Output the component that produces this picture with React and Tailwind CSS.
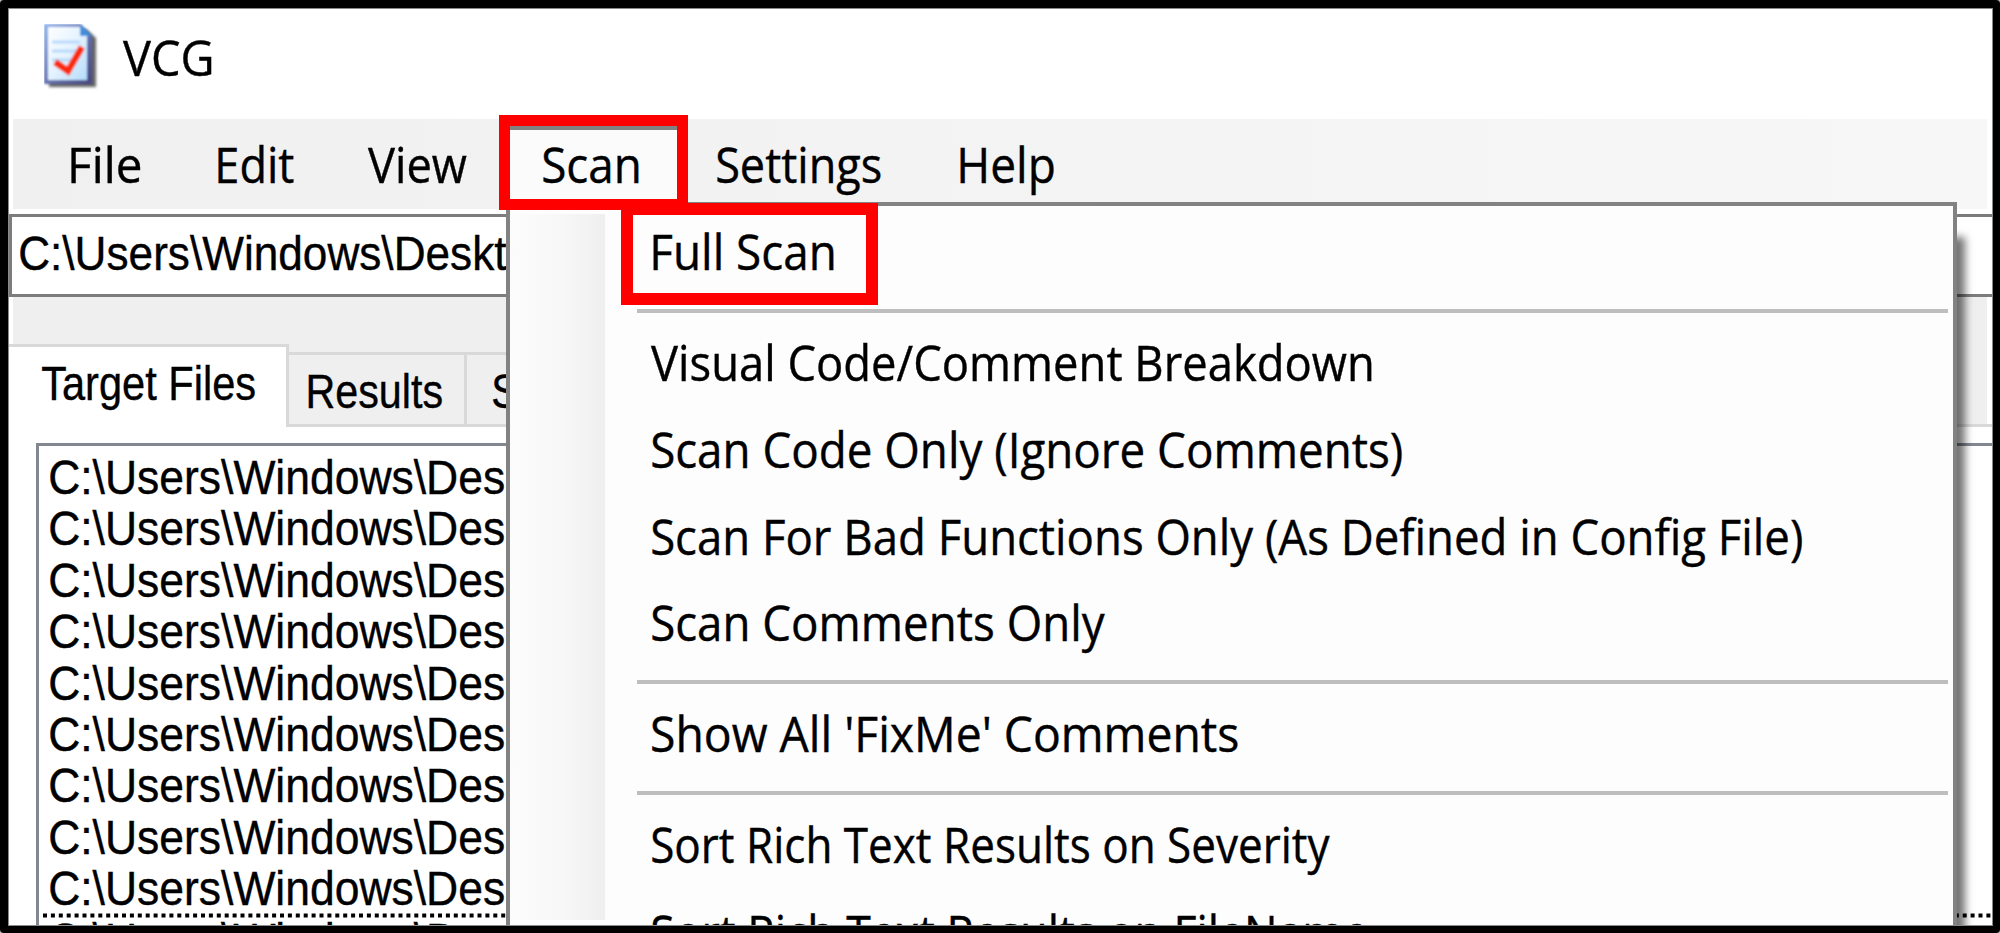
import React, { useLayoutEffect, useState } from "react";

const UI = '"Open Sans", "Noto Sans", sans-serif';
const GDI = '"Liberation Sans", Arial, sans-serif';

// A single line of text whose drawn glyphs span exactly `width` pixels.
function Label({ children, width, size = 49, font = UI, measure }) {
  const [transform, setTransform] = useState("none");
  useLayoutEffect(() => {
    const ctx = document.createElement("canvas").getContext("2d");
    ctx.font = `${size}px ${font}`;
    const m = ctx.measureText(measure || children);
    const ink = m.actualBoundingBoxRight + m.actualBoundingBoxLeft;
    const k = width / ink;
    setTransform(`translateX(${m.actualBoundingBoxLeft * k}px) scaleX(${k})`);
  }, [children, width, size, font, measure]);
  return (
    <span
      className="block w-0 origin-left whitespace-pre [-webkit-text-stroke:0.4px_#000]"
      style={{ fontFamily: font, fontSize: size, transform }}
    >
      {children}
    </span>
  );
}

function AppIcon() {
  return (
    <svg width="60" height="68" viewBox="0 0 60 68" className="block">
      <defs>
        <linearGradient id="page" x1="0" y1="0" x2="1" y2="1">
          <stop offset="0" stopColor="#ffffff" />
          <stop offset="0.5" stopColor="#e4f3ff" />
          <stop offset="1" stopColor="#b5dcfb" />
        </linearGradient>
        <linearGradient id="edge" x1="0" y1="0" x2="1" y2="1">
          <stop offset="0" stopColor="#8fb4ec" />
          <stop offset="0.55" stopColor="#6470ae" />
          <stop offset="1" stopColor="#464480" />
        </linearGradient>
        <filter id="soft" x="-20%" y="-20%" width="140%" height="140%">
          <feGaussianBlur stdDeviation="1.6" />
        </filter>
        <filter id="smooth" x="-10%" y="-10%" width="120%" height="120%">
          <feGaussianBlur stdDeviation="0.8" />
        </filter>
      </defs>
      <path d="M5 5H42L52 14V63H5Z" fill="#4a4a4a" opacity="0.85" filter="url(#soft)" />
      <g filter="url(#smooth)">
        <path d="M0 0H37L48 12V60H0Z" fill="url(#edge)" />
        <path d="M4 3H36V12H43V56H4Z" fill="url(#page)" />
        <path d="M8 18H36M8 27H34M8 36H28" stroke="#b9d9fa" strokeWidth="3" />
        <path d="M36 0L48 12H36Z" fill="#3f8fdc" />
        <path d="M11 38L24 47L38 23" fill="none" stroke="#fb2b0b" strokeWidth="6.5" />
      </g>
    </svg>
  );
}

const menus = [
  { t: "File", gap: "ml-[62px]", w: 69 },
  { t: "Edit", gap: "ml-[147px]", w: 76 },
  { t: "View", gap: "ml-[150px]", w: 99 },
  { t: "Settings", gap: "ml-[349px]", w: 164 },
  { t: "Help", gap: "ml-[243px]", w: 94 },
];

const items = [
  { t: "Full Scan", w: 181, row: "pl-[48px] leading-[78px]" },
  null,
  { t: "Visual Code/Comment Breakdown", w: 721, row: "pl-[46px] leading-[78px]" },
  { t: "Scan Code Only (Ignore Comments)", w: 750, row: "pl-[47px] leading-[78px]" },
  { t: "Scan For Bad Functions Only (As Defined in Config File)", w: 1150, row: "pl-[47px] leading-[78px]" },
  { t: "Scan Comments Only", w: 453, row: "pl-[47px] leading-[78px]" },
  null,
  { t: "Show All 'FixMe' Comments", w: 586, row: "pl-[47px] leading-[78px]" },
  null,
  { t: "Sort Rich Text Results on Severity", w: 678, row: "pl-[47px] leading-[78px]" },
  { t: "Sort Rich Text Results on FileName", w: 622, m: "Sort Rich Text Results on FileN", row: "pl-[47px] leading-[81px]" },
];

function ScanMenu() {
  return (
    <div className="absolute left-[497px] top-[193px] h-[760px] w-[1451px] border-[4px] border-[#828282] bg-[#fdfdfd] shadow-[11px_32px_8px_-3px_rgba(0,0,0,0.55)]">
      <div className="flex h-full pt-[6px]">
        <div className="mt-[2px] h-[706px] w-[95px] shrink-0 bg-linear-to-r from-[#fcfcfc] via-[#f8f8f8] to-[#efefef]" />
        <div className="flex grow flex-col">
          {items.map((it, i) =>
            it ? (
              <div key={i} className={`h-[86.8px] shrink-0 text-black ${it.row}`}>
                <Label width={it.w} measure={it.m}>{it.t}</Label>
              </div>
            ) : (
              <div key={i} className="flex h-[24.2px] shrink-0 items-center pl-[32px] pr-[5px]">
                <div className="h-[4px] w-full bg-[#bebebe]" />
              </div>
            )
          )}
        </div>
      </div>
    </div>
  );
}

export default function App() {
  return (
    <div className="h-[933px] w-[2000px] overflow-hidden bg-[#b8b8b8]">
      <div className="h-full w-full rounded-[4px] bg-black pb-[7px] pl-[8px] pr-[7px] pt-[8px]">
        <div className="relative flex h-full w-full flex-col overflow-hidden border border-[#8a8a8a] bg-white text-black">
          {/* title bar */}
          <div className="flex h-[110px] shrink-0">
            <div className="ml-[35px] w-[79px] pt-[15px]">
              <AppIcon />
            </div>
            <div className="pt-[10px] leading-[76px]">
              <Label width={88}>VCG</Label>
            </div>
          </div>

          {/* menu bar */}
          <div className="ml-[4px] mr-[5px] flex h-[90px] shrink-0 bg-linear-to-r from-[#f0f0f0] to-[#f7f7f7] pt-[7px] leading-[76px]">
            <div className="-ml-[4px] flex">
              {menus.map((m) => (
                <div key={m.t} className={m.gap}>
                  <Label width={m.w}>{m.t}</Label>
                </div>
              ))}
            </div>
          </div>

          {/* path box */}
          <div className="mt-[5px] h-[83px] shrink-0 border-y-[3px] border-l-[3px] border-[#7c7c7c] bg-white pl-[8px] leading-[78px]">
            <div className="-mt-[3px]">
              <Label width={487} size={48.5} font={GDI} measure="C:\Users\Windows\Deskt">
                {"C:\\Users\\Windows\\Desktop"}
              </Label>
            </div>
          </div>

          {/* tab strip */}
          <div className="ml-[4px] mr-[5px] flex h-[130px] shrink-0 items-end bg-[#efefef]">
            <div className="-ml-[4px] flex h-[83px] w-[280px] shrink-0 border-r-[3px] border-t-[3px] border-[#d9d9d9] bg-white pl-[33px] leading-[72px]">
              <Label width={213} size={48.5} font={GDI}>Target Files</Label>
            </div>
            <div className="flex h-[75px] w-[178px] shrink-0 border-b-[3px] border-r-[3px] border-t-[3px] border-[#d9d9d9] pl-[19px] leading-[72px]">
              <Label width={134} size={48.5} font={GDI}>Results</Label>
            </div>
            <div className="flex h-[75px] w-[240px] shrink-0 border-b-[3px] border-r-[3px] border-t-[3px] border-[#d9d9d9] pl-[26px] leading-[72px]">
              <Label width={175} size={48.5} font={GDI}>Summary</Label>
            </div>
            <div className="-mr-[5px] h-[3px] grow bg-[#d9d9d9]" />
          </div>

          {/* target file list */}
          <div className="ml-[27px] mt-[16px] h-[520px] shrink-0 border-l-[3px] border-t-[3px] border-[#828790] bg-white pt-[6px]">
            {Array.from({ length: 10 }, (_, i) => (
              <div key={i} className="relative h-[51.4px] pl-[11px] leading-[51.4px]">
                {i === 9 && (
                  <svg className="absolute -top-[2px] left-[4px] block" width="1960" height="5">
                    <line x1="0" y1="2.5" x2="1960" y2="2.5" stroke="#000" strokeWidth="4" strokeDasharray="4 3.9" />
                  </svg>
                )}
                <Label width={454} size={48.5} font={GDI} measure="C:\Users\Windows\Des">
                  {"C:\\Users\\Windows\\Desktop"}
                </Label>
              </div>
            ))}
          </div>

          <ScanMenu />

          {/* open menu header */}
          <div className="absolute left-[498px] top-[116px] h-[80px] w-[172px] border-t-[5px] border-[#828282] bg-[#fbfbfb] pl-[36px] leading-[76px]">
            <div className="-mt-[4px]">
              <Label width={96}>Scan</Label>
            </div>
          </div>

          {/* highlight frames */}
          <div className="absolute left-[490px] top-[106px] h-[95px] w-[189px] border-[11.5px] border-[#ff0000]" />
          <div className="absolute left-[612px] top-[194px] h-[102px] w-[257px] border-[12px] border-[#ff0000]" />
        </div>
      </div>
    </div>
  );
}
